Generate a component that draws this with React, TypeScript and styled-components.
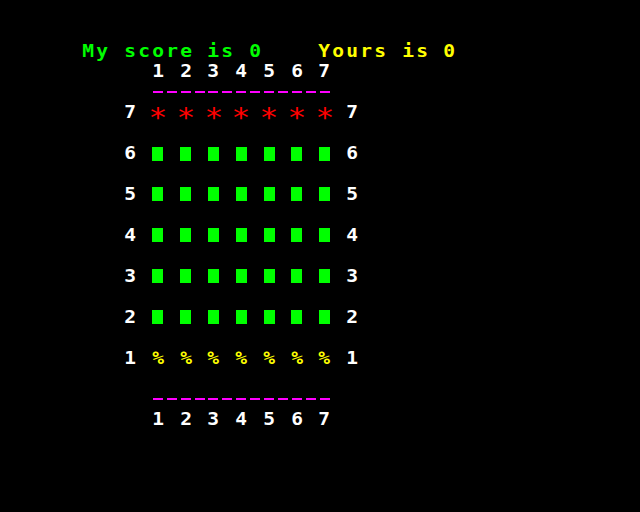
import React from "react";
import styled, { createGlobalStyle } from "styled-components";

const Global = createGlobalStyle`
  html, body { margin: 0; padding: 0; background: #000; }
  #root { width: 640px; height: 512px; }
`;

const GREEN = "#00ff00";
const YELLOW = "#ffff00";
const WHITE = "#ffffff";
const MAGENTA = "#ff00ff";
const RED = "#ff0000";

const Screen = styled.div`
  width: 640px;
  height: 512px;
  box-sizing: border-box;
  padding-left: 81.5px;
  background: #000;
  display: flex;
  flex-direction: column;
  overflow: hidden;
`;

const Line = styled.div`
  height: 20.48px;
  flex: none;
  display: flex;
  align-items: center;
`;

const Cell = styled.span<{ $c: string }>`
  width: 13.9px;
  height: 100%;
  flex: none;
  display: flex;
  align-items: center;
  justify-content: center;
  color: ${(p) => p.$c};
  font-family: "DejaVu Sans Mono", "Liberation Mono", monospace;
  font-size: 17px;
  font-weight: bold;
  line-height: 1;
  white-space: pre;
`;

const Glyph = styled.span`
  display: inline-block;
  transform: scaleX(1.15);
`;

const StarGlyph = styled.span`
  display: inline-block;
  font-size: 26px;
  font-weight: normal;
  transform: translateY(5px) scaleX(1.2);
`;

const Dash = styled.span`
  width: 10px;
  height: 2px;
  background: ${MAGENTA};
`;

const Block = styled.span`
  width: 11px;
  height: 14px;
  background: ${GREEN};
`;

type Seg = { t: string; c: string };

function renderChar(ch: string, c: string, key: string) {
  if (ch === "■") return <Cell key={key} $c={c}><Block /></Cell>;
  if (ch === "-") return <Cell key={key} $c={c}><Dash /></Cell>;
  if (ch === "*") return <Cell key={key} $c={c}><StarGlyph>*</StarGlyph></Cell>;
  if (ch === " ") return <Cell key={key} $c={c} />;
  return <Cell key={key} $c={c}><Glyph>{ch}</Glyph></Cell>;
}

function Row({ segs }: { segs: Seg[] }) {
  const cells: React.ReactNode[] = [];
  segs.forEach((s, si) => {
    Array.from(s.t).forEach((ch, ci) => cells.push(renderChar(ch, s.c, `${si}-${ci}`)));
  });
  return <Line>{cells}</Line>;
}

const numbers: Seg[] = [{ t: "     1 2 3 4 5 6 7", c: WHITE }];
const dashes: Seg[] = [{ t: "     -------------", c: MAGENTA }];

function boardRow(n: number): Seg[] {
  const piece = n === 7 ? "*" : n === 1 ? "%" : "■";
  const color = n === 7 ? RED : n === 1 ? YELLOW : GREEN;
  return [
    { t: `   ${n} `, c: WHITE },
    { t: Array(7).fill(piece).join(" "), c: color },
    { t: ` ${n}`, c: WHITE },
  ];
}

const lines: Seg[][] = [
  [],
  [],
  [
    { t: "My score is 0", c: GREEN },
    { t: "    ", c: WHITE },
    { t: "Yours is 0", c: YELLOW },
  ],
  numbers,
  dashes,
  boardRow(7),
  [],
  boardRow(6),
  [],
  boardRow(5),
  [],
  boardRow(4),
  [],
  boardRow(3),
  [],
  boardRow(2),
  [],
  boardRow(1),
  [],
  dashes,
  numbers,
  [],
  [],
  [],
  [],
];

export default function App() {
  return (
    <>
      <Global />
      <Screen>
        {lines.map((segs, i) => (
          <Row key={i} segs={segs} />
        ))}
      </Screen>
    </>
  );
}
